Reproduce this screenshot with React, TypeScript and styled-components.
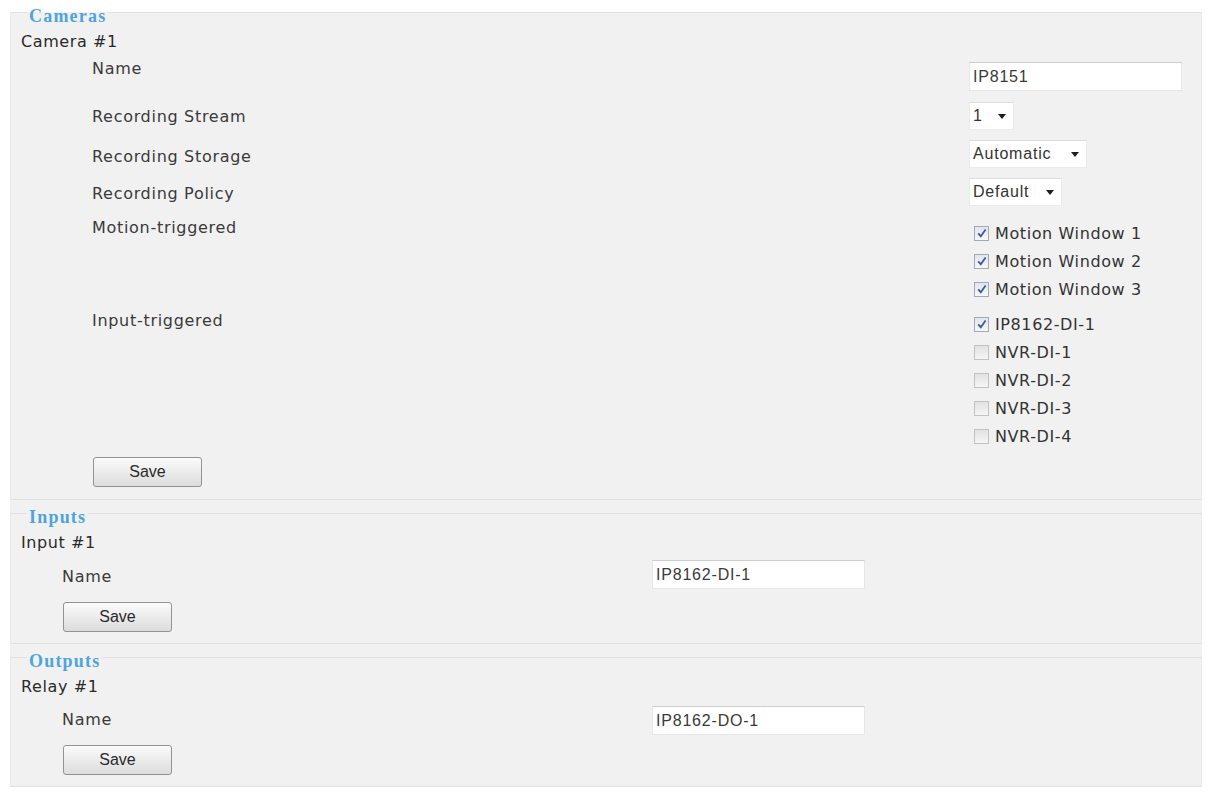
import React, { FC } from "react";
import styled, { createGlobalStyle } from "styled-components";

const GlobalStyle = createGlobalStyle`
  body {
    margin: 0;
    background: #fff;
  }
`;

type CheckItem = { label: string; checked: boolean };

const motionWindows: CheckItem[] = [
  { label: "Motion Window 1", checked: true },
  { label: "Motion Window 2", checked: true },
  { label: "Motion Window 3", checked: true },
];

const inputTriggers: CheckItem[] = [
  { label: "IP8162-DI-1", checked: true },
  { label: "NVR-DI-1", checked: false },
  { label: "NVR-DI-2", checked: false },
  { label: "NVR-DI-3", checked: false },
  { label: "NVR-DI-4", checked: false },
];

const Caret: FC = () => (
  <svg width="8" height="5" viewBox="0 0 8 5">
    <path d="M0 0 H8 L4 5 Z" fill="#1e1e1e" />
  </svg>
);

const Tick: FC = () => (
  <svg width="12" height="12" viewBox="0 0 12 12">
    <path d="M2.2 6.4 L4.8 9.2 L9.6 2.4" fill="none" stroke="#3d5c9e" strokeWidth="1.8" />
  </svg>
);

const Dropdown: FC<{ value: string; width: number }> = ({ value, width }) => (
  <SDropdown $w={width}>
    <span>{value}</span>
    <Caret />
  </SDropdown>
);

const CheckList: FC<{ items: CheckItem[] }> = ({ items }) => (
  <SControl>
    {items.map((it) => (
      <SCheckRow key={it.label}>
        <SBox $on={it.checked}>{it.checked && <Tick />}</SBox>
        {it.label}
      </SCheckRow>
    ))}
  </SControl>
);

type NamePanelProps = {
  title: string;
  heading: string;
  value: string;
  rowTop: number;
  labelDy: number;
  saveTop: number;
};

const NamePanel: FC<NamePanelProps> = ({ title, heading, value, rowTop, labelDy, saveTop }) => (
  <SPanel $pb={11}>
    <SLegend>{title}</SLegend>
    <SHeading>{heading}</SHeading>
    <SForm $indent={41}>
      <SRow $top={rowTop}>
        <SLabel $w={590} $dy={labelDy}>Name</SLabel>
        <STextBox defaultValue={value} />
      </SRow>
      <SRow $top={saveTop}>
        <SButton>Save</SButton>
      </SRow>
    </SForm>
  </SPanel>
);

const App: FC = () => {
  return (
    <>
      <GlobalStyle />
      <SPage>
        <SPanel $pb={12}>
          <SLegend>Cameras</SLegend>
          <SHeading>Camera #1</SHeading>
          <SForm $indent={71}>
            <SRow $top={10}>
              <SLabel $w={877} $dy={-3}>Name</SLabel>
              <STextBox defaultValue="IP8151" />
            </SRow>
            <SRow $top={11}>
              <SLabel $w={877} $dy={5}>Recording Stream</SLabel>
              <Dropdown value="1" width={45} />
            </SRow>
            <SRow $top={10}>
              <SLabel $w={877} $dy={7}>Recording Storage</SLabel>
              <Dropdown value="Automatic" width={118} />
            </SRow>
            <SRow $top={10}>
              <SLabel $w={877} $dy={6}>Recording Policy</SLabel>
              <Dropdown value="Default" width={93} />
            </SRow>
            <SRow $top={13}>
              <SLabel $w={877} $dy={-1}>Motion-triggered</SLabel>
              <CheckList items={motionWindows} />
            </SRow>
            <SRow $top={7}>
              <SLabel $w={877} $dy={1}>Input-triggered</SLabel>
              <CheckList items={inputTriggers} />
            </SRow>
            <SRow $top={7}>
              <SButton>Save</SButton>
            </SRow>
          </SForm>
        </SPanel>

        <NamePanel title="Inputs" heading="Input #1" value="IP8162-DI-1" rowTop={7} labelDy={7} saveTop={13} />
        <NamePanel title="Outputs" heading="Relay #1" value="IP8162-DO-1" rowTop={9} labelDy={4} saveTop={10} />
      </SPage>
    </>
  );
};

const SPage = styled.div`
  margin: 12px 0 10px 10px;
  width: 1192px;
  background: #f1f1f1;
  display: flex;
  flex-direction: column;
  gap: 13px;
  font-family: "DejaVu Sans", Verdana, sans-serif;
  color: #333;
`;

const SPanel = styled.section<{ $pb: number }>`
  border: 1px solid #ebebeb;
  border-top-color: #e0e0e0;
  border-bottom-color: #e0e0e0;
  padding: 0 10px ${(p) => p.$pb}px 10px;
`;

const SLegend = styled.div`
  width: fit-content;
  margin: -7px 0 0 6px;
  padding: 0 2px;
  line-height: 20px;
  font-family: "Liberation Serif", "Times New Roman", serif;
  font-weight: bold;
  font-size: 18px;
  letter-spacing: 1.2px;
  color: #4ea4dc;
  background: linear-gradient(transparent 6px, #f1f1f1 6px);
`;

const SHeading = styled.div`
  margin-top: 6px;
  line-height: 20px;
  font-size: 16px;
  letter-spacing: 0.6px;
  color: #2a2a2a;
`;

const SForm = styled.div<{ $indent: number }>`
  display: flex;
  flex-direction: column;
  margin-left: ${(p) => p.$indent}px;
`;

const SRow = styled.div<{ $top: number }>`
  display: flex;
  align-items: flex-start;
  margin-top: ${(p) => p.$top}px;
`;

const SLabel = styled.div<{ $w: number; $dy: number }>`
  flex: none;
  width: ${(p) => p.$w}px;
  margin-top: ${(p) => p.$dy}px;
  line-height: 20px;
  font-size: 16px;
  letter-spacing: 0.7px;
  color: #3a3a3a;
`;

const SControl = styled.div`
  display: flex;
  flex-direction: column;
`;

const STextBox = styled.input`
  box-sizing: border-box;
  width: 213px;
  height: 29px;
  margin: 0;
  padding: 0 3px;
  border: 1px solid #e6e6e6;
  border-top-color: #cdcdcd;
  background: #fff;
  outline: none;
  font-family: "Liberation Sans", Arial, sans-serif;
  font-size: 16px;
  letter-spacing: 0.8px;
  color: #3a3a3a;
`;

const SDropdown = styled.div<{ $w: number }>`
  box-sizing: border-box;
  display: inline-flex;
  align-items: center;
  justify-content: space-between;
  width: ${(p) => p.$w}px;
  height: 28px;
  padding: 0 7px 0 3px;
  border: 1px solid #ebebeb;
  border-top-color: #dddddd;
  background: #fff;
  font-family: "Liberation Sans", Arial, sans-serif;
  font-size: 16px;
  letter-spacing: 0.8px;
  color: #333;
`;

const SCheckRow = styled.label`
  display: flex;
  align-items: center;
  gap: 6px;
  height: 28px;
  padding-left: 5px;
  font-size: 16px;
  letter-spacing: 0.6px;
  color: #333;
`;

const SBox = styled.span<{ $on: boolean }>`
  box-sizing: border-box;
  display: inline-flex;
  align-items: center;
  justify-content: center;
  width: 15px;
  height: 15px;
  border: 1px solid ${(p) => (p.$on ? "#a4a9b6" : "#c2c2c2")};
  background: ${(p) =>
    p.$on
      ? "linear-gradient(#e1e5ee, #f6f7fa)"
      : "linear-gradient(#e2e2e2, #f5f5f5)"};
`;

const SButton = styled.button`
  box-sizing: border-box;
  width: 109px;
  height: 30px;
  margin: 0 0 0 1px;
  padding: 0;
  border: 1px solid #939393;
  border-radius: 3px;
  background: linear-gradient(#fbfbfb, #dcdcdc);
  font-family: "Liberation Sans", Arial, sans-serif;
  font-size: 16px;
  color: #2a2a2a;
  cursor: pointer;
`;

export default App;
